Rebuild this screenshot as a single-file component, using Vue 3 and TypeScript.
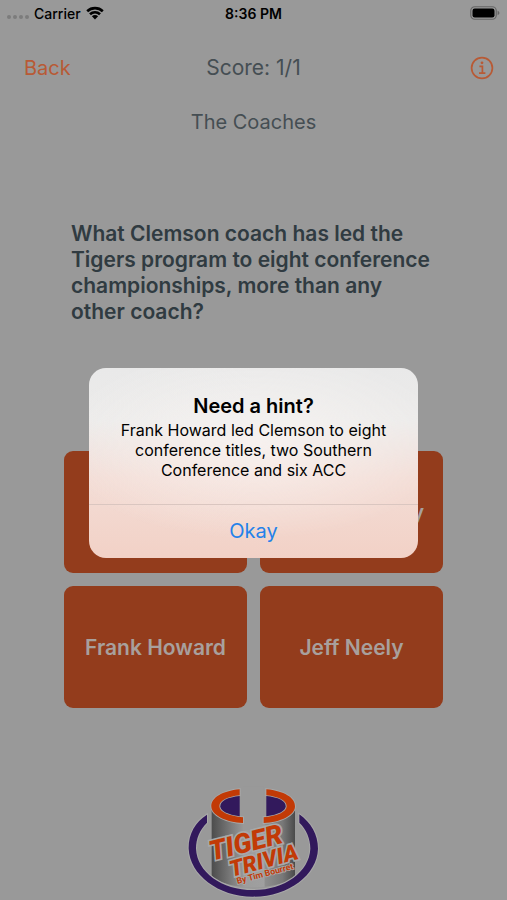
<script setup lang="ts">
import { ref } from 'vue'

interface Hint {
  title: string
  body: string
}

const score = ref('1/1')
const category = 'The Coaches'
const question =
  'What Clemson coach has led the Tigers program to eight conference championships, more than any other coach?'
const answers: string[] = ['Danny Ford', 'Dabo Swinney', 'Frank Howard', 'Jeff Neely']
const hint: Hint = {
  title: 'Need a hint?',
  body: 'Frank Howard led Clemson to eight conference titles, two Southern Conference and six ACC',
}
const hintOpen = ref(true)
</script>

<template>
  <div class="screen">
    <header class="status">
      <div class="carrier">
        <span class="dots"><i v-for="n in 4" :key="n"></i></span>
        <span>Carrier</span>
        <svg class="wifi" viewBox="0 0 18 14" aria-hidden="true">
          <path d="M1.2 5.2a11.4 11.4 0 0 1 15.6 0" />
          <path d="M4 8.2a7.2 7.2 0 0 1 10 0" />
          <path class="core" d="M9 13.4 5.9 10.3a4.4 4.4 0 0 1 6.2 0z" />
        </svg>
      </div>
      <time class="clock">8:36 PM</time>
      <svg class="battery" viewBox="0 0 30 14" aria-hidden="true">
        <rect class="case" x="0.75" y="0.75" width="25.5" height="12.5" rx="4" />
        <rect x="2.5" y="2.5" width="22" height="9" rx="2.2" />
        <path class="tip" d="M27.6 4.8v4.4c1-.4 1.8-1.2 1.8-2.2s-.8-1.8-1.8-2.2z" />
      </svg>
    </header>

    <nav class="bar">
      <a class="back" href="#">Back</a>
      <span class="score">Score: {{ score }}</span>
      <button class="info" type="button" aria-label="Hint" @click="hintOpen = true">
        <svg viewBox="0 0 24 24" aria-hidden="true">
          <circle cx="12" cy="12" r="10.4" />
          <path d="M9.4 10.3h3v6.7M9 17.1h6.4" />
          <circle class="dot" cx="12" cy="6.8" r="1.4" />
        </svg>
      </button>
    </nav>

    <main class="quiz">
      <h1 class="category">{{ category }}</h1>
      <p class="question">{{ question }}</p>
      <div class="answers">
        <button v-for="a in answers" :key="a" class="answer" type="button">{{ a }}</button>
      </div>
    </main>

    <footer class="brand">
      <svg class="logo" viewBox="0 0 450 360" role="img" aria-label="Tiger Trivia by Tim Bourret">
        <defs>
          <linearGradient id="steel" x1="0" x2="1" y1="0" y2="0">
            <stop offset="0" stop-color="#4c4c4c" />
            <stop offset="0.4" stop-color="#9c9c9c" />
            <stop offset="0.63" stop-color="#a0a0a0" />
            <stop offset="0.64" stop-color="#8e8e8e" />
            <stop offset="0.85" stop-color="#787878" />
            <stop offset="1" stop-color="#4a4a4a" />
          </linearGradient>
        </defs>
        <path class="steel" d="M98 80C104 108 150 124 192 128H254C300 124 340 108 348 80V287C310 333 140 333 98 287Z" />
        <path class="gap" d="M192 20H254V150H192Z" />
        <path class="ring" d="M84 104C48 126 28 164 29 206C32 284 118 350 222 350C328 350 414 286 417 206C417 164 396 128 361 103V128C382 148 394 176 394 206C391 276 316 330 222 330C128 330 54 276 51 206C51 176 62 150 84 128Z" />
        <path class="rim" d="M182 28C130 33 96 53 97 80C99 107 142 126 192 129V112C150 108 121 96 121 79C121 61 146 50 182 46Z" />
        <path class="rim" d="M262 28C315 33 349 53 348 80C346 107 304 126 254 129V112C295 108 323 96 323 79C323 61 298 50 262 46Z" />
        <path class="bore" d="M182 48C146 52 124 62 124 79C124 93 146 104 182 109Z" />
        <path class="bore" d="M262 48C298 52 320 62 320 79C320 93 298 104 262 109Z" />
        <g transform="rotate(-14 103 241)">
          <text class="word" x="98" y="241" font-size="82">TIGER</text>
        </g>
        <g transform="rotate(-15 165 290)">
          <text class="word" x="158" y="289" font-size="67">TRIVIA</text>
        </g>
        <g transform="rotate(-15 175 310)">
          <text class="byline" x="175" y="312" font-size="26">By Tim Bourret</text>
        </g>
      </svg>
    </footer>

    <div v-if="hintOpen" class="overlay">
      <section class="alert" role="alertdialog" aria-labelledby="hint-title" aria-describedby="hint-body">
        <div class="copy">
          <h2 id="hint-title">{{ hint.title }}</h2>
          <p id="hint-body">{{ hint.body }}</p>
        </div>
        <button class="okay" type="button" @click="hintOpen = false">Okay</button>
      </section>
    </div>
  </div>
</template>

<style>
body {
  background: #999;
}
</style>

<style scoped>
.screen {
  position: relative;
  display: flex;
  flex-direction: column;
  box-sizing: border-box;
  min-height: 100vh;
  background: #999;
  color: #454e53;
  font-family: Inter, 'Liberation Sans', sans-serif;
}
button {
  font: inherit;
  border: 0;
  padding: 0;
  background: none;
  cursor: pointer;
}
.status {
  display: grid;
  grid-template-columns: 1fr auto 1fr;
  align-items: center;
  height: 26px;
  padding: 0 7px;
  color: #000;
  font-size: 14px;
  font-weight: 500;
}
.carrier {
  display: flex;
  align-items: center;
  gap: 5px;
}
.dots {
  display: flex;
  gap: 2px;
  padding-top: 8px;
}
.dots i {
  width: 4px;
  height: 4px;
  border-radius: 50%;
  background: #7c7c7c;
}
.wifi {
  width: 18px;
  height: 14px;
  fill: none;
  stroke: #000;
  stroke-width: 2.6;
}
.wifi .core {
  fill: #000;
  stroke: none;
}
.clock {
  font-weight: 600;
}
.battery {
  justify-self: end;
  width: 30px;
  height: 14px;
}
.battery .case {
  fill: none;
  stroke: #666;
  stroke-width: 1.2;
}
.battery .tip {
  fill: #666;
}
.bar {
  display: grid;
  grid-template-columns: 1fr auto 1fr;
  align-items: center;
  padding: 28px 13px 0;
  font-size: 20px;
  line-height: 28px;
}
.back {
  padding-left: 11px;
  color: #b85a35;
  text-decoration: none;
}
.score {
  font-size: 21px;
}
.info {
  justify-self: end;
  width: 24px;
  height: 24px;
}
.info svg {
  display: block;
  fill: none;
  stroke: #b85a35;
  stroke-width: 1.7;
}
.info .dot {
  fill: #b85a35;
  stroke: none;
}
.quiz {
  padding: 26px 64px 0;
}
.category {
  margin: 0;
  font-size: 20px;
  line-height: 28px;
  font-weight: 400;
  text-align: center;
}
.question {
  margin: 85px 0 0;
  padding: 0 7px;
  color: #303b41;
  font-size: 21px;
  line-height: 26px;
  font-weight: 600;
}
.answers {
  display: grid;
  grid-template-columns: 1fr 1fr;
  gap: 13px;
  margin-top: 126px;
}
.answer {
  height: 122px;
  border-radius: 9px;
  background: #933c1c;
  color: #a8a09d;
  font-size: 21px;
  font-weight: 600;
}
.brand {
  display: flex;
  justify-content: center;
  margin-top: auto;
}
.logo {
  width: 150px;
  height: 120px;
}
.steel {
  fill: url(#steel);
}
.gap {
  fill: #999;
}
.ring,
.bore {
  fill: #32195c;
}
.ring,
.rim {
  stroke: #a8a8a8;
  stroke-width: 6px;
  paint-order: stroke;
}
.rim {
  fill: #c23a06;
}
.word {
  fill: #c23a06;
  stroke: #a8a8a8;
  stroke-width: 10px;
  paint-order: stroke;
  font-family: Roboto, sans-serif;
  font-weight: 900;
  font-style: italic;
}
.byline {
  fill: #c23a06;
  stroke: #a8a8a8;
  stroke-width: 5px;
  paint-order: stroke;
  font-family: Roboto, sans-serif;
  font-weight: 700;
}
.overlay {
  position: absolute;
  inset: 0;
  display: flex;
  align-items: center;
  justify-content: center;
  padding-top: 25px;
}
.alert {
  width: 65%;
  overflow: hidden;
  border-radius: 17px;
  background:
    radial-gradient(ellipse 60% 50% at 50% 40%, rgba(250, 246, 244, 0.7), rgba(250, 246, 244, 0)),
    linear-gradient(#e9e9e9, #ecebea 28%, #f3ddd6 58%, #f2d1c6);
  color: #000;
  text-align: center;
}
.copy {
  padding: 24px 28px;
}
.copy h2 {
  margin: 0;
  font-size: 20px;
  line-height: 28px;
  font-weight: 600;
}
.copy p {
  margin: 0;
  font-size: 16px;
  line-height: 20px;
}
.okay {
  width: 100%;
  height: 54px;
  border-top: 1px solid #dac6c0;
  color: #2482ea;
  font-size: 20px;
}
</style>
